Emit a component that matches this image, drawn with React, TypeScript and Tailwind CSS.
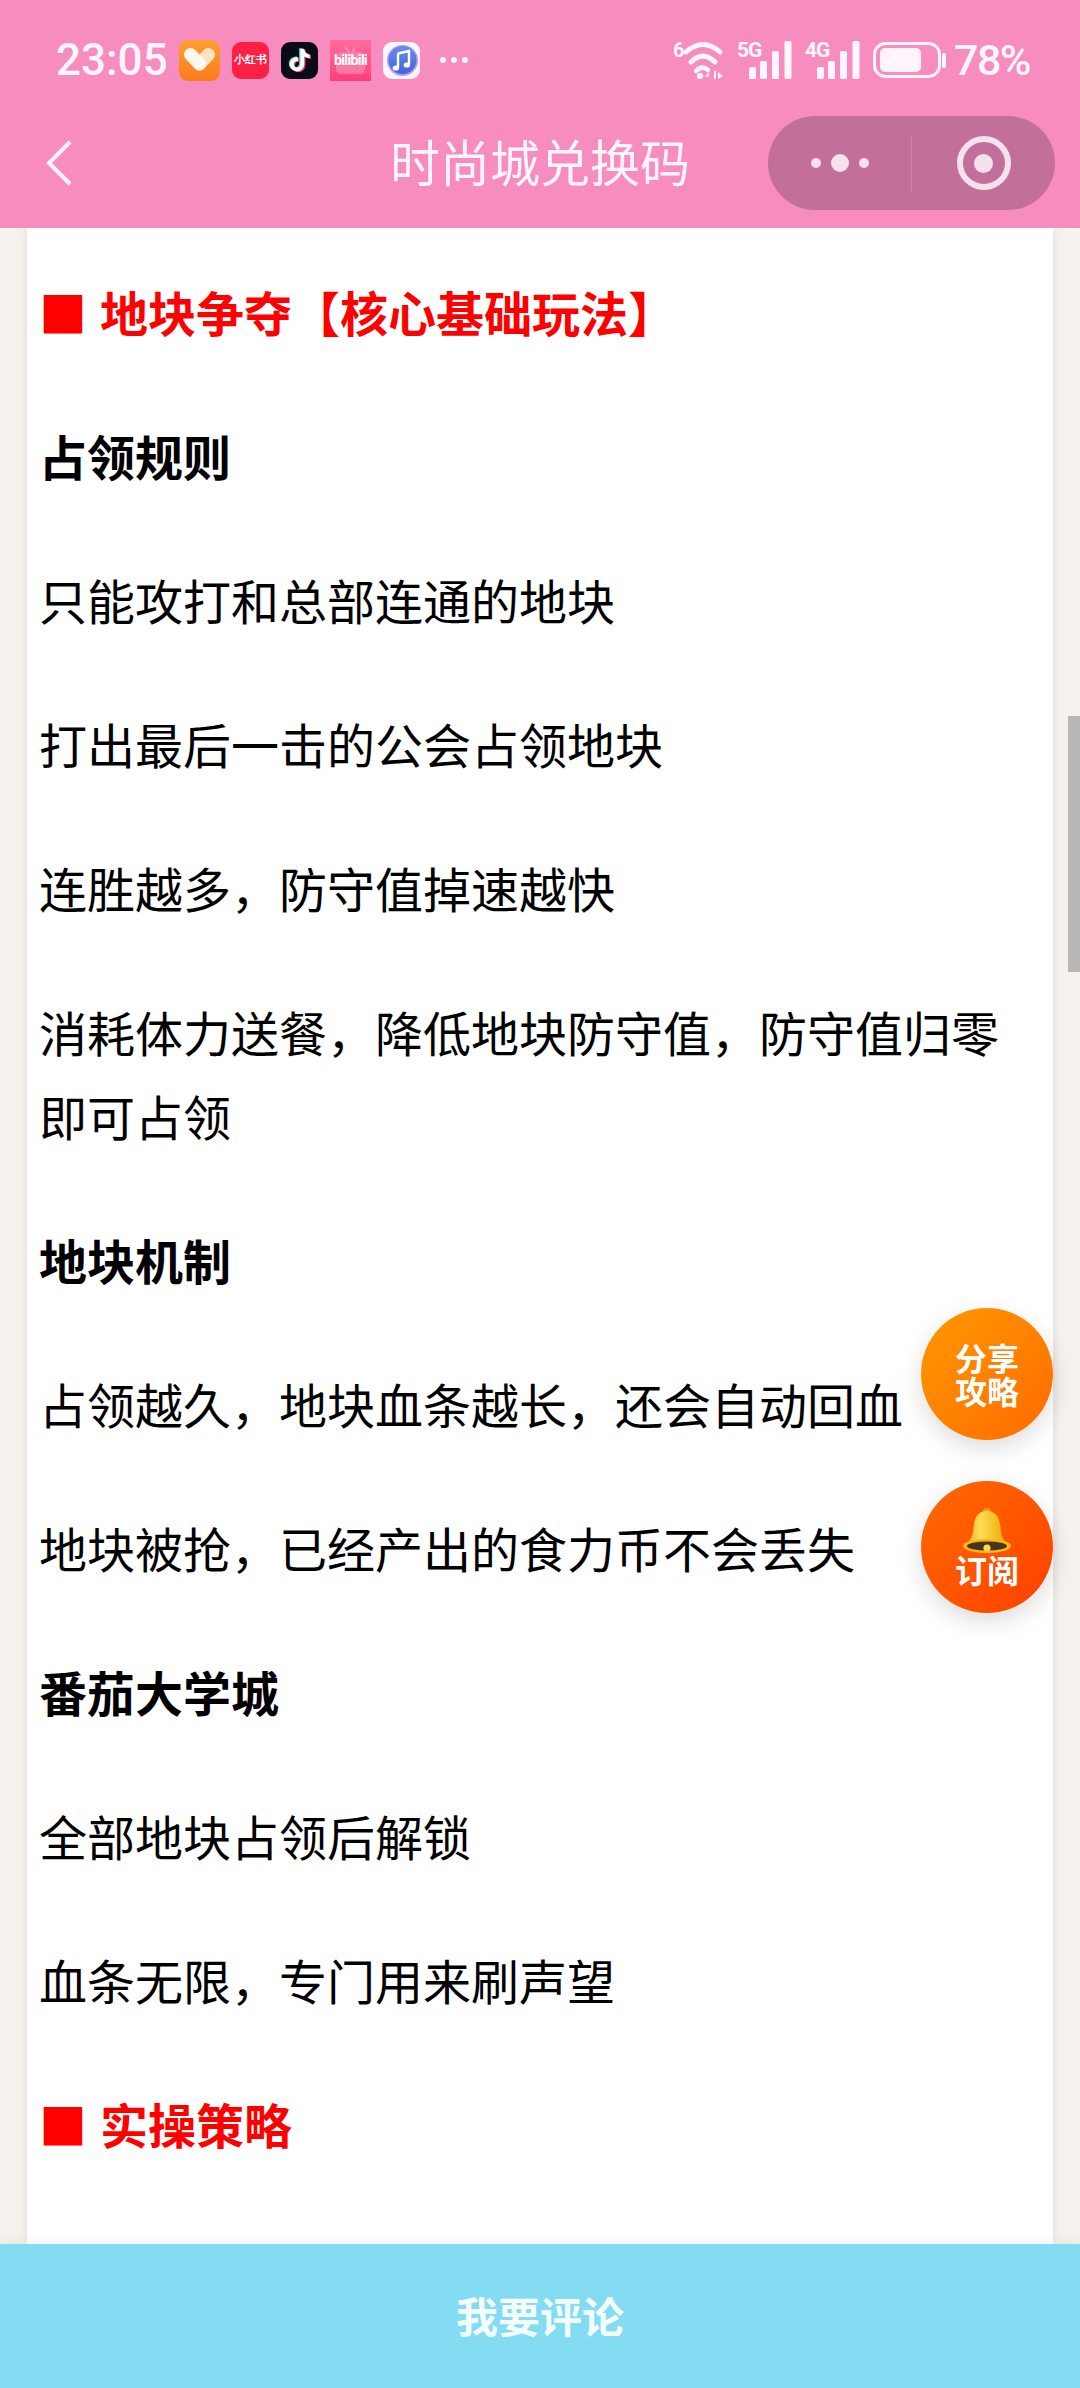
import type { ReactNode } from 'react'

type Line = { text: string; kind?: 'red' | 'bold' }

const LINES: Line[] = [
  { text: '■ 地块争夺【核心基础玩法】', kind: 'red' },
  { text: '占领规则', kind: 'bold' },
  { text: '只能攻打和总部连通的地块' },
  { text: '打出最后一击的公会占领地块' },
  { text: '连胜越多，防守值掉速越快' },
  { text: '消耗体力送餐，降低地块防守值，防守值归零即可占领' },
  { text: '地块机制', kind: 'bold' },
  { text: '占领越久，地块血条越长，还会自动回血' },
  { text: '地块被抢，已经产出的食力币不会丢失' },
  { text: '番茄大学城', kind: 'bold' },
  { text: '全部地块占领后解锁' },
  { text: '血条无限，专门用来刷声望' },
  { text: '■ 实操策略', kind: 'red' },
]

const TIKTOK =
  'M448,209.91a210.06,210.06,0,0,1-122.77-39.25V349.38A162.55,162.55,0,1,1,185,188.31V278.2a74.62,74.62,0,1,0,52.23,71.18V0l88,0a121.18,121.18,0,0,0,1.86,22.17h0A122.18,122.18,0,0,0,381,102.39a121.43,121.43,0,0,0,67,20.14Z'

const HeartApp = () => (
  <svg width="41" height="41" viewBox="0 0 41 41" fill="none">
    <defs>
      <linearGradient id="heartBg" x1="0" y1="0" x2="0" y2="1">
        <stop offset="0" stopColor="#FF9F2E" />
        <stop offset="1" stopColor="#FC7A1E" />
      </linearGradient>
    </defs>
    <rect width="41" height="41" rx="9" fill="url(#heartBg)" />
    <path d="M20.5 24 L29.5 14.5" stroke="#FDE3C4" strokeWidth="13" strokeLinecap="round" />
    <path d="M11.5 14.5 L20.5 24" stroke="#FFF6EC" strokeWidth="13" strokeLinecap="round" />
  </svg>
)

const XhsApp = () => (
  <div className="flex h-[37px] w-[37px] items-center justify-center rounded-[9px] bg-[#FB2044] text-[10.5px] font-bold leading-none text-white">
    小红书
  </div>
)

const TiktokApp = () => (
  <svg width="37" height="37" viewBox="0 0 37 37">
    <rect width="37" height="37" rx="9" fill="#0B0B18" />
    <g transform="translate(9 7) scale(0.044)">
      <path d={TIKTOK} fill="#5FE3E5" transform="translate(-28 -16)" />
      <path d={TIKTOK} fill="#F0305A" transform="translate(28 16)" />
      <path d={TIKTOK} fill="#FFFFFF" />
    </g>
  </svg>
)

const BiliApp = () => (
  <div className="relative flex h-[41px] w-[41px] items-center justify-center bg-gradient-to-b from-[#FF6B9C] to-[#FF3D7C]">
    <svg className="absolute left-[5px] top-[5px]" width="31" height="31" viewBox="0 0 31 31" fill="none">
      <path d="M10 2l4 5M21 2l-4 5" stroke="#FF8FB4" strokeWidth="2" />
      <rect x="1" y="7" width="29" height="22" rx="5" fill="#FF8FB4" opacity="0.65" />
    </svg>
    <span className="relative text-[14px] font-bold leading-none tracking-[-0.6px] text-white">bilibili</span>
  </div>
)

const MusicApp = () => (
  <svg width="37" height="37" viewBox="0 0 37 37">
    <defs>
      <linearGradient id="musicBg" x1="0" y1="0" x2="0" y2="1">
        <stop offset="0" stopColor="#6C8CEB" />
        <stop offset="1" stopColor="#3F63DC" />
      </linearGradient>
    </defs>
    <rect width="37" height="37" rx="9" fill="#F7F5FE" />
    <circle cx="19.5" cy="18.5" r="15.5" fill="#B99AF0" />
    <circle cx="19.5" cy="18" r="14" fill="url(#musicBg)" />
    <path d="M15 11.5 L26 9 V23" stroke="#fff" strokeWidth="2.4" fill="none" />
    <path d="M15 11.5 V26" stroke="#fff" strokeWidth="2.4" fill="none" />
    <ellipse cx="12.8" cy="26" rx="3.2" ry="2.6" fill="#fff" />
    <ellipse cx="23.8" cy="23" rx="3.2" ry="2.6" fill="#fff" />
  </svg>
)

const WifiIcon = () => (
  <div className="relative h-[38px] w-[51px]">
    <span className="absolute left-0 top-0 font-['Roboto'] text-[20px] font-bold leading-[18px] text-[#FFF5FA]">6</span>
    <svg className="absolute left-0 top-0" width="51" height="38" viewBox="0 0 51 38" fill="none" stroke="#FFF5FA" strokeLinecap="round">
      <path d="M13 11 Q30 -4 47 11" strokeWidth="5" />
      <path d="M18 21 Q30 9 42 21" strokeWidth="5" />
      <path d="M23 30 Q29 24 35 29" strokeWidth="4.5" />
      <circle cx="27" cy="35" r="3.2" fill="#FFF5FA" stroke="none" />
      <path d="M36 38 V31 L32 35.5 H36 Z" fill="#FFF5FA" stroke="none" />
      <path d="M41 30 V38 H43 V30 Z M45 31 L50 35 L45 38 Z" fill="#FFF5FA" stroke="none" />
    </svg>
  </div>
)

const SignalIcon = ({ label }: { label: string }) => (
  <div className="relative h-[38px] w-[55px]">
    <span className="absolute left-0 top-0 font-['Roboto'] text-[21px] font-bold leading-[18px] tracking-[-1px] text-[#FFF5FA]">
      {label}
    </span>
    <svg className="absolute left-0 top-0" width="55" height="38" viewBox="0 0 55 38" fill="#FFF5FA">
      <rect x="12" y="26" width="7" height="12" rx="1.5" />
      <rect x="23" y="20" width="7" height="18" rx="1.5" />
      <rect x="35" y="10" width="7" height="28" rx="1.5" />
      <rect x="47.5" y="0" width="7" height="38" rx="1.5" />
    </svg>
  </div>
)

const BatteryIcon = () => (
  <svg width="73" height="36" viewBox="0 0 73 36" fill="none">
    <rect x="1.5" y="1.5" width="65" height="33" rx="11" stroke="#FFF5FA" strokeWidth="3" />
    <rect x="7" y="6" width="41" height="24" rx="5" fill="#FFF5FA" />
    <rect x="69" y="11" width="4" height="15" rx="2" fill="#FFF5FA" />
  </svg>
)

const StatusBar = () => (
  <div className="flex h-[116px] items-center justify-between pl-[56px] pr-[50px] pt-[4px] font-['Roboto'] text-[#FFF5FA]">
    <div className="flex items-center">
      <span className="w-[110px] text-[44px] font-medium leading-none">23:05</span>
      <div className="ml-[13px] flex items-center gap-[12px]">
        <HeartApp />
        <XhsApp />
        <TiktokApp />
        <BiliApp />
        <MusicApp />
      </div>
      <div className="ml-[20px] flex gap-[5px]">
        <i className="h-[6px] w-[6px] rounded-full bg-[#FFF5FA]" />
        <i className="h-[6px] w-[6px] rounded-full bg-[#FFF5FA]" />
        <i className="h-[6px] w-[6px] rounded-full bg-[#FFF5FA]" />
      </div>
    </div>
    <div className="flex items-center gap-[13px]">
      <WifiIcon />
      <SignalIcon label="5G" />
      <SignalIcon label="4G" />
      <div className="flex items-center gap-[8px]">
        <BatteryIcon />
        <span className="text-[43px] font-medium leading-none tracking-[-1.5px]">78%</span>
      </div>
    </div>
  </div>
)

const Capsule = () => (
  <div className="mr-[25px] flex h-[94px] w-[287px] items-center justify-self-end rounded-full bg-[#C2709A]">
    <div className="flex flex-1 items-center justify-center gap-[10px]">
      <i className="h-[10px] w-[10px] rounded-full bg-[#F3E2EB]" />
      <i className="h-[18px] w-[18px] rounded-full bg-[#F3E2EB]" />
      <i className="h-[10px] w-[10px] rounded-full bg-[#F3E2EB]" />
    </div>
    <div className="h-[57px] w-px bg-[#CE86AB]" />
    <div className="flex flex-1 items-center justify-center">
      <div className="flex h-[54px] w-[54px] items-center justify-center rounded-full border-[6px] border-[#F3E2EB]">
        <i className="h-[19px] w-[19px] rounded-full bg-[#F3E2EB]" />
      </div>
    </div>
  </div>
)

const NavBar = () => (
  <div className="h-[112px]">
    <div className="grid h-[94px] grid-cols-[1fr_auto_1fr] items-center">
      <div className="pl-[46px]">
        <svg width="26" height="46" viewBox="0 0 26 46" fill="none" stroke="#FFF5FA" strokeWidth="4">
          <path d="M24 2 L3 23 L24 44" />
        </svg>
      </div>
      <div className="pb-[7px] text-[50px] font-normal leading-none text-[#FFF5FA]">时尚城兑换码</div>
      <Capsule />
    </div>
  </div>
)

const Bell = () => (
  <svg width="50" height="46" viewBox="0 0 50 46">
    <defs>
      <linearGradient id="bellGold" x1="0" y1="0" x2="1" y2="0">
        <stop offset="0" stopColor="#D99A12" />
        <stop offset="0.35" stopColor="#FFDD55" />
        <stop offset="0.75" stopColor="#F2B81E" />
        <stop offset="1" stopColor="#C98A0E" />
      </linearGradient>
    </defs>
    <circle cx="25" cy="4" r="4" fill="#E0A21A" />
    <path d="M25 3 C13 3 12 14 11 24 C10 31 6 34 1 39 L49 39 C44 34 40 31 39 24 C38 14 37 3 25 3 Z" fill="url(#bellGold)" />
    <ellipse cx="25" cy="38" rx="24" ry="7" fill="#F2B81E" />
    <ellipse cx="25" cy="38" rx="20" ry="4.5" fill="#4A3418" />
    <circle cx="25" cy="40" r="3.6" fill="#FFD84A" />
  </svg>
)

const FloatButton = ({ className, children }: { className: string; children: ReactNode }) => (
  <div
    className={`absolute right-[27px] flex h-[132px] w-[132px] flex-col items-center justify-center rounded-full text-[32px] font-bold leading-[33px] text-white shadow-[0_8px_24px_rgba(0,0,0,0.14)] ${className}`}
  >
    {children}
  </div>
)

const Article = () => (
  <div className="relative min-h-0 flex-1 overflow-hidden bg-[#F6F3EE]">
    <div className="mx-[27px] h-full bg-white pl-[12px] pr-[14px] pt-[41px] shadow-[0_0_10px_rgba(0,0,0,0.1)]">
      {LINES.map(line => (
        <p
          key={line.text}
          className={
            line.kind === 'red'
              ? 'mb-[60px] text-[48px] font-bold leading-[84px] text-[#FF0000] [word-spacing:2px]'
              : line.kind === 'bold'
                ? 'mb-[60px] text-[48px] font-bold leading-[84px] text-black'
                : 'mb-[60px] text-[48px] leading-[84px] text-black'
          }
        >
          {line.text}
        </p>
      ))}
    </div>
    <div className="absolute right-0 top-[488px] h-[256px] w-[12px] bg-[#BAB8B6]" />
    <FloatButton className="top-[1080px] bg-gradient-to-br from-[#FF9800] to-[#FF6A00]">
      <span>分享</span>
      <span>攻略</span>
    </FloatButton>
    <FloatButton className="top-[1253px] bg-gradient-to-br from-[#FF6A00] to-[#FF3D00]">
      <Bell />
      <span className="-mt-[1px]">订阅</span>
    </FloatButton>
  </div>
)

export default function App() {
  return (
    <div className="flex h-[2388px] w-[1080px] flex-col overflow-hidden bg-white font-['Noto_Sans_CJK_SC','Noto_Sans',sans-serif]">
      <div className="h-[228px] shrink-0 bg-[#F78DBE]">
        <StatusBar />
        <NavBar />
      </div>
      <Article />
      <div className="z-10 flex h-[144px] shrink-0 items-center justify-center bg-[#84DCF2] pb-[3px] text-[42px] font-bold text-[#F4FCFE] shadow-[0_0_14px_rgba(0,0,0,0.08)]">
        我要评论
      </div>
    </div>
  )
}
